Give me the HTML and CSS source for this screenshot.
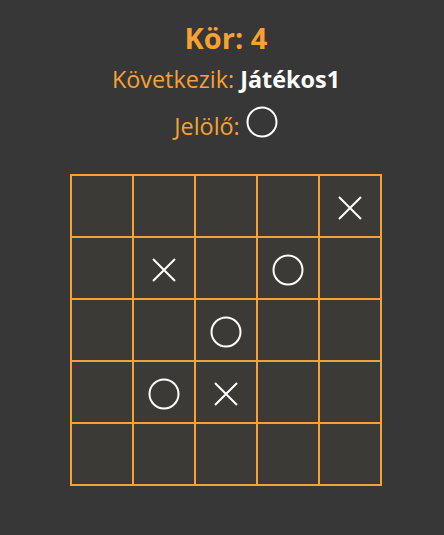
FILE: index.html
```html
<!DOCTYPE html>
<html lang="hu">
<head>
<meta charset="utf-8">
<title>Amőba</title>
<link rel="stylesheet" href="styles.css">
</head>
<body>
<main class="game">
  <h1 class="round">Kör: 4</h1>
  <p class="next">Következik: <strong class="player">Játékos1</strong></p>
  <p class="marker"><span class="marker-label">Jelölő:</span><svg class="mark mark-o marker-icon" viewBox="0 0 32 32" width="32" height="32"><circle cx="16" cy="16" r="14.5" fill="none" stroke="#fff" stroke-width="2"/></svg></p>
  <div class="board">
    <div class="cell"></div><div class="cell"></div><div class="cell"></div><div class="cell"></div>
    <div class="cell"><svg class="mark mark-x" viewBox="0 0 24 24" width="24" height="24"><path d="M1 1L23 23M23 1L1 23" stroke="#fff" stroke-width="2"/></svg></div>

    <div class="cell"></div>
    <div class="cell"><svg class="mark mark-x" viewBox="0 0 24 24" width="24" height="24"><path d="M1 1L23 23M23 1L1 23" stroke="#fff" stroke-width="2"/></svg></div>
    <div class="cell"></div>
    <div class="cell"><svg class="mark mark-o" viewBox="0 0 32 32" width="32" height="32"><circle cx="16" cy="16" r="14.5" fill="none" stroke="#fff" stroke-width="2"/></svg></div>
    <div class="cell"></div>

    <div class="cell"></div><div class="cell"></div>
    <div class="cell"><svg class="mark mark-o" viewBox="0 0 32 32" width="32" height="32"><circle cx="16" cy="16" r="14.5" fill="none" stroke="#fff" stroke-width="2"/></svg></div>
    <div class="cell"></div><div class="cell"></div>

    <div class="cell"></div>
    <div class="cell"><svg class="mark mark-o" viewBox="0 0 32 32" width="32" height="32"><circle cx="16" cy="16" r="14.5" fill="none" stroke="#fff" stroke-width="2"/></svg></div>
    <div class="cell"><svg class="mark mark-x" viewBox="0 0 24 24" width="24" height="24"><path d="M1 1L23 23M23 1L1 23" stroke="#fff" stroke-width="2"/></svg></div>
    <div class="cell"></div><div class="cell"></div>

    <div class="cell"></div><div class="cell"></div><div class="cell"></div><div class="cell"></div><div class="cell"></div>
  </div>
</main>
</body>
</html>
```

FILE: styles.css
```css
html, body {
  margin: 0;
  padding: 0;
  background: #363736;
}
body {
  font-family: "Open Sans", "Noto Sans", sans-serif;
  color: #f6a133;
}
.game {
  display: flex;
  flex-direction: column;
  align-items: center;
  padding-top: 18px;
  padding-left: 8px;
}
.round {
  margin: 0;
  font-size: 29px;
  line-height: 40px;
  font-weight: 700;
}
.next {
  margin: 5px 0 0;
  font-size: 23.4px;
  line-height: 32px;
}
.player {
  color: #ffffff;
  font-weight: 700;
}
.marker {
  margin: 15px 0 0;
  font-size: 23.4px;
  line-height: 32px;
  display: flex;
  align-items: flex-start;
  gap: 6px;
}
.marker-icon {
  margin-top: -4px;
}
.board {
  margin-top: 32px;
  display: grid;
  grid-template-columns: repeat(5, 62px);
  grid-template-rows: repeat(5, 62px);
  border: 1px solid #f6a133;
}
.cell {
  box-sizing: border-box;
  border: 1px solid #f6a133;
  background: #3c3a37;
  display: flex;
  align-items: center;
  justify-content: center;
  padding-top: 4px;
}
.mark {
  display: block;
}
```
